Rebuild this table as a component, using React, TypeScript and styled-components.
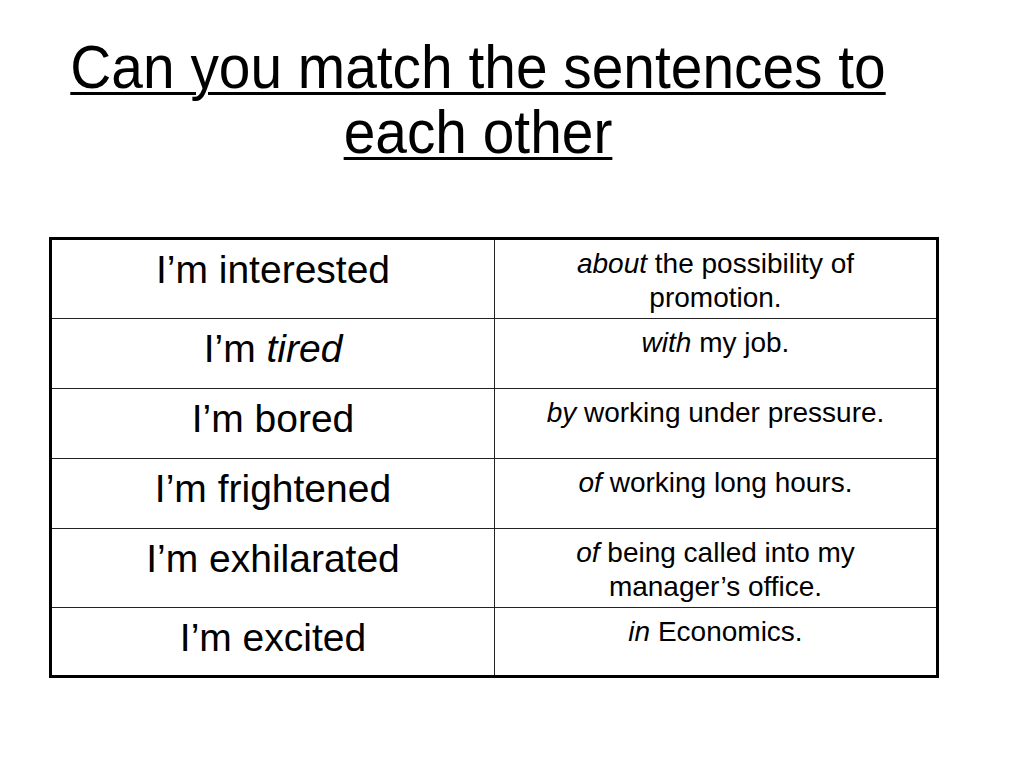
import React from "react";
import styled, { createGlobalStyle } from "styled-components";

const GlobalStyle = createGlobalStyle`
  html, body {
    margin: 0;
    padding: 0;
    background: #ffffff;
  }
  body {
    font-family: "Liberation Sans", Arial, sans-serif;
    color: #000000;
  }
`;

const Slide = styled.div`
  width: 1024px;
  height: 768px;
  box-sizing: border-box;
  padding: 34px 0 0 33px;
  display: flex;
  flex-direction: column;
  align-items: flex-start;
  background: #ffffff;
`;

const Title = styled.h1`
  margin: 0;
  width: 890px;
  font-family: "Liberation Sans", Arial, sans-serif;
  font-weight: normal;
  font-size: 62px;
  line-height: 65px;
  white-space: nowrap;
  text-align: center;
  text-decoration: underline;
  text-decoration-thickness: 3px;
  text-underline-offset: 4px;
  transform: scaleX(0.917);
  transform-origin: center top;
`;

const Table = styled.div`
  margin: 73px 0 0 16px;
  width: 890px;
  box-sizing: border-box;
  border: 3px solid #000000;
  display: grid;
  grid-template-columns: 443px 1fr;
`;

const Cell = styled.div<{ $last?: boolean; $left?: boolean }>`
  box-sizing: border-box;
  min-height: ${(p) => (p.$last ? "67px" : "70px")};
  padding: 7px 12px 3px;
  text-align: center;
  border-bottom: ${(p) => (p.$last ? "none" : "1px solid #222")};
  border-right: ${(p) => (p.$left ? "1px solid #222" : "none")};
`;

const Phrase = styled.div`
  font-size: 39px;
  line-height: 45px;
`;

const Ending = styled.div`
  font-size: 28px;
  line-height: 34px;
`;

type Row = { left: React.ReactNode; right: React.ReactNode };

const rows: Row[] = [
  {
    left: <>I’m interested</>,
    right: (
      <>
        <i>about</i> the possibility of
        <br />
        promotion.
      </>
    ),
  },
  {
    left: (
      <>
        I’m <i>tired</i>
      </>
    ),
    right: (
      <>
        <i>with</i> my job.
      </>
    ),
  },
  {
    left: <>I’m bored</>,
    right: (
      <>
        <i>by</i> working under pressure.
      </>
    ),
  },
  {
    left: <>I’m frightened</>,
    right: (
      <>
        <i>of</i> working long hours.
      </>
    ),
  },
  {
    left: <>I’m exhilarated</>,
    right: (
      <>
        <i>of</i> being called into my
        <br />
        manager’s office.
      </>
    ),
  },
  {
    left: <>I’m excited</>,
    right: (
      <>
        <i>in</i> Economics.
      </>
    ),
  },
];

export default function App() {
  return (
    <>
      <GlobalStyle />
      <Slide>
        <Title>
          Can you match the sentences to
          <br />
          each other
        </Title>
        <Table>
          {rows.map((r, i) => {
            const last = i === rows.length - 1;
            return (
              <React.Fragment key={i}>
                <Cell $left $last={last}>
                  <Phrase>{r.left}</Phrase>
                </Cell>
                <Cell $last={last}>
                  <Ending>{r.right}</Ending>
                </Cell>
              </React.Fragment>
            );
          })}
        </Table>
      </Slide>
    </>
  );
}
